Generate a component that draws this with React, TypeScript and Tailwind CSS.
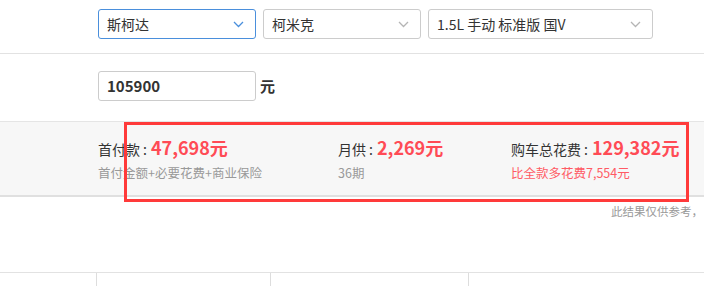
import React from "react";

const font = { fontFamily: '"Noto Sans CJK SC", "Noto Sans", sans-serif' };

function Chevron({ active }: { active?: boolean }) {
  return (
    <svg width="11" height="7" viewBox="0 0 11 7" className="shrink-0">
      <path
        d="M1 1l4.5 4.5L10 1"
        fill="none"
        stroke={active ? "#4a8fdc" : "#b5b5b5"}
        strokeWidth="1.3"
      />
    </svg>
  );
}

function Select({ label, width, active }: { label: string; width: string; active?: boolean }) {
  return (
    <div
      className={`${width} h-[30px] flex items-center justify-between pl-2 pr-[11px] rounded-[3px] border bg-white text-[14px] text-[#333] ${
        active ? "border-[#4a8fdc]" : "border-[#cccccc]"
      }`}
    >
      <span>{label}</span>
      <Chevron active={active} />
    </div>
  );
}

function Stat({ label, value, note, noteRed }: { label: string; value: string; note: string; noteRed?: boolean }) {
  return (
    <>
      <div className="flex items-baseline h-[26px]">
        <span className="text-[14px] text-[#333]">{label}</span>
        <span className="text-[14px] text-[#333] ml-[3px] mr-[4px]">:</span>
        <span className="text-[18px] font-bold text-[#ff4b55]">{value}</span>
      </div>
      <div className={`text-[12.5px] mt-[4px] ${noteRed ? "text-[#ff5a64]" : "text-[#999]"}`}>{note}</div>
    </>
  );
}

export default function App() {
  return (
    <div className="relative w-[704px] h-[286px] overflow-hidden bg-white" style={font}>
      {/* car selection */}
      <div className="h-[53px] flex items-start pt-[9px] pl-[98px] gap-[7px]">
        <Select label="斯柯达" width="w-[158px]" active />
        <Select label="柯米克" width="w-[158px]" />
        <Select label="1.5L 手动 标准版 国V" width="w-[225px]" />
      </div>
      <div className="border-t border-[#e2e2e2]" />

      {/* price */}
      <div className="h-[67px] flex items-start pt-[17px] pl-[98px] gap-1">
        <div className="w-[158px] h-[30px] flex items-center px-2 border border-[#cccccc] rounded-[3px] text-[15px] font-bold text-[#333]">
          105900
        </div>
        <span className="text-[15px] font-bold text-[#333] leading-[30px]">元</span>
      </div>

      {/* result band */}
      <div className="h-[76px] bg-[#f7f7f7] border-t border-[#e5e5e5] border-b-2 border-b-[#e0e0e0] flex pl-[98px] pt-[12px]">
        <div className="w-[240px]">
          <Stat label="首付款" value="47,698元" note="首付金额+必要花费+商业保险" />
        </div>
        <div className="w-[173px]">
          <Stat label="月供" value="2,269元" note="36期" />
        </div>
        <div>
          <Stat label="购车总花费" value="129,382元" note="比全款多花费7,554元" noteRed />
        </div>
      </div>

      <div className="pl-[611px] pt-[6px] h-[75px] text-[11.5px] text-[#999] whitespace-nowrap">
        此结果仅供参考，
      </div>

      {/* bottom table edge */}
      <div className="flex border-t border-[#e2e2e2] h-[14px]">
        <div className="w-[97px] border-r border-[#dddddd]" />
        <div className="w-[174px] border-r border-[#dddddd]" />
        <div className="w-[198px] border-r border-[#dddddd]" />
        <div className="flex-1" />
      </div>

      {/* highlight annotation */}
      <div className="absolute left-[124px] top-[122px] w-[565px] h-[80px] border-[3px] border-[#ff3a3a] pointer-events-none" />
    </div>
  );
}
